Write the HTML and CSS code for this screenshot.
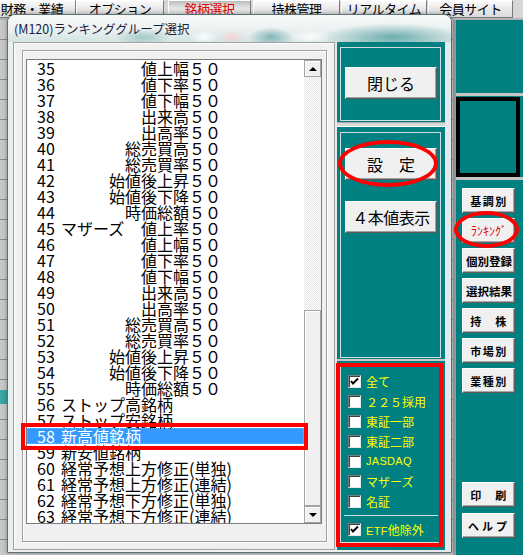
FILE: index.html
```html
<!DOCTYPE html>
<html lang="ja">
<head>
<meta charset="utf-8">
<title>M120</title>
<link rel="stylesheet" href="styles.css">
</head>
<body>
<div class="screen">
  <div class="tabs">
    <div class="tab t1">財務・業績</div>
    <div class="tab t2">オプション</div>
    <div class="tab t3 active">銘柄選択</div>
    <div class="tab t4">持株管理</div>
    <div class="tab t5">リアルタイム</div>
    <div class="tab t6">会員サイト</div>
  </div>
  <div class="main">
    <div class="bg-left"><div class="bg-teal"></div></div>
    <div class="side">
      <div class="side-top"></div>
      <div class="side-line"></div>
      <div class="side-box"></div>
      <div class="side-line"></div>
      <div class="side-btns">
        <div class="sbtn">基調別</div>
        <div class="sbtn red">ﾗﾝｷﾝｸﾞ</div>
        <div class="sbtn tight">個別登録</div>
        <div class="sbtn tight">選択結果</div>
        <div class="sbtn">持　株</div>
        <div class="sbtn">市場別</div>
        <div class="sbtn">業種別</div>
        <div class="sbtn print">印　刷</div>
        <div class="sbtn help">ヘルプ</div>
      </div>
    </div>
  </div>

  <div class="dialog">
    <div class="titlebar"><span class="title">(M120)ランキンググループ選択</span></div>
    <div class="client">
      <div class="lp">
        <div class="lp-inner">
          <div class="listbox">
            <div class="items">
              <div class="row"><span class="num">35</span><span class="nm">値上幅５０</span></div>
              <div class="row"><span class="num">36</span><span class="nm">値下率５０</span></div>
              <div class="row"><span class="num">37</span><span class="nm">値下幅５０</span></div>
              <div class="row"><span class="num">38</span><span class="nm">出来高５０</span></div>
              <div class="row"><span class="num">39</span><span class="nm">出高率５０</span></div>
              <div class="row"><span class="num">40</span><span class="nm">総売買高５０</span></div>
              <div class="row"><span class="num">41</span><span class="nm">総売買率５０</span></div>
              <div class="row"><span class="num">42</span><span class="nm">始値後上昇５０</span></div>
              <div class="row"><span class="num">43</span><span class="nm">始値後下降５０</span></div>
              <div class="row"><span class="num">44</span><span class="nm">時価総額５０</span></div>
              <div class="row"><span class="num">45</span><span class="nm split"><span>マザーズ</span><span>値上率５０</span></span></div>
              <div class="row"><span class="num">46</span><span class="nm">値上幅５０</span></div>
              <div class="row"><span class="num">47</span><span class="nm">値下率５０</span></div>
              <div class="row"><span class="num">48</span><span class="nm">値下幅５０</span></div>
              <div class="row"><span class="num">49</span><span class="nm">出来高５０</span></div>
              <div class="row"><span class="num">50</span><span class="nm">出高率５０</span></div>
              <div class="row"><span class="num">51</span><span class="nm">総売買高５０</span></div>
              <div class="row"><span class="num">52</span><span class="nm">総売買率５０</span></div>
              <div class="row"><span class="num">53</span><span class="nm">始値後上昇５０</span></div>
              <div class="row"><span class="num">54</span><span class="nm">始値後下降５０</span></div>
              <div class="row"><span class="num">55</span><span class="nm">時価総額５０</span></div>
              <div class="row"><span class="num">56</span><span class="nm l">ストップ高銘柄</span></div>
              <div class="row"><span class="num">57</span><span class="nm l">ストップ安銘柄</span></div>
              <div class="row sel"><span class="num">58</span><span class="nm l">新高値銘柄</span></div>
              <div class="row"><span class="num">59</span><span class="nm l">新安値銘柄</span></div>
              <div class="row"><span class="num">60</span><span class="nm l">経常予想上方修正(単独)</span></div>
              <div class="row"><span class="num">61</span><span class="nm l">経常予想上方修正(連結)</span></div>
              <div class="row"><span class="num">62</span><span class="nm l">経常予想下方修正(単独)</span></div>
              <div class="row"><span class="num">63</span><span class="nm l">経常予想下方修正(連結)</span></div>
            </div>
            <div class="vscroll">
              <div class="sb-btn up"><i></i></div>
              <div class="sb-track"></div>
              <div class="sb-thumb"></div>
              <div class="sb-btn down"><i></i></div>
            </div>
          </div>
        </div>
      </div>
      <div class="rcol">
        <div class="pnl p1">
          <div class="frame"><div class="btn b-close">閉じる</div></div>
        </div>
        <div class="pgap g1"></div>
        <div class="pnl p2">
          <div class="frame">
            <div class="btn b-set">設　定</div>
            <div class="btn b-four">４本値表示</div>
          </div>
        </div>
        <div class="pgap g2"></div>
        <div class="pnl p3">
          <div class="frame chkframe">
            <div class="chk"><span class="box"><svg width="11" height="11" viewBox="0 0 11 11"><polyline points="2,5 4,7.5 9,2.5" fill="none" stroke="#000" stroke-width="2"/></svg></span><span>全て</span></div>
            <div class="chk"><span class="box"></span><span>２２５採用</span></div>
            <div class="chk"><span class="box"></span><span>東証一部</span></div>
            <div class="chk"><span class="box"></span><span>東証二部</span></div>
            <div class="chk"><span class="box"></span><span class="lat">JASDAQ</span></div>
            <div class="chk"><span class="box"></span><span>マザーズ</span></div>
            <div class="chk"><span class="box"></span><span>名証</span></div>
            <div class="sep"></div>
            <div class="chk etf"><span class="box"><svg width="11" height="11" viewBox="0 0 11 11"><polyline points="2,5 4,7.5 9,2.5" fill="none" stroke="#000" stroke-width="2"/></svg></span><span><span class="lat">ETF</span>他除外</span></div>
          </div>
        </div>
      </div>
    </div>
  </div>

  <div class="mark rect-row"></div>
  <div class="mark rect-chk"></div>
  <div class="mark ell-set"></div>
  <div class="mark ell-rank"></div>
</div>
</body>
</html>
```

FILE: styles.css
```css
* { box-sizing: border-box; margin: 0; padding: 0; }
html, body { width: 523px; height: 555px; overflow: hidden; }
body { font-family: "Noto Sans CJK JP", "Noto Sans", sans-serif; background: #c8c8c8; }

.screen { position: relative; width: 523px; height: 555px; overflow: hidden; display: flex; flex-direction: column; background: #cfcfcf; }

/* ---------- main window tabs ---------- */
.tabs { display: flex; height: 20px; background: #d6d6d6; border-bottom: 2px solid #b4b4b4; }
.tab {
  height: 18px; display: flex; align-items: center; justify-content: center;
  font-size: 13px; letter-spacing: -0.5px; color: #000; line-height: 1;
  background: linear-gradient(#fbfbfb, #e9e9e9 45%, #dcdcdc);
  border: 1px solid; border-color: #ffffff #7a7a7a #7a7a7a #ffffff;
  padding-bottom: 1px;
}
.t1 { width: 88px; margin-left: -12px; }
.t2 { width: 88px; }
.t3 { width: 83px; margin-left: 4px; color: #e00000; background: linear-gradient(#bdbdbd, #e6e6e6 45%, #dedede); }
.t4 { width: 87px; margin-left: 2px; }
.t5 { width: 86px; margin-left: 1px; }
.t6 { width: 85px; margin-left: 1px; }

.main { flex: 1; display: flex; }
.bg-left {
  flex: 1; position: relative;
  background: repeating-linear-gradient(#c9c9c9 0 19px, #8a8a8a 19px 20px);
}
.bg-teal { width: 8px; height: 14px; margin-top: 370px; background: #3aa6a6; }

.side { width: 70px; border-left: 3px solid #9c9c9c; background: #008080; display: flex; flex-direction: column; }
.side-top { height: 73px; }
.side-line { height: 3px; background: #c6c6c6; }
.side-box { width: 64px; height: 80px; margin-top: 1px; border: 4px solid #000; background: #008080; }
.side-btns { padding: 8px 0 0 6px; display: flex; flex-direction: column; gap: 5px; }
.sbtn {
  width: 53px; height: 25px; display: flex; align-items: center; justify-content: center;
  background: #f0f0f0; border: 1px solid; border-color: #ffffff #5e5e5e #5e5e5e #ffffff;
  box-shadow: inset -1px -1px 0 #a8a8a8;
  font-size: 11px; font-weight: bold; letter-spacing: 1.5px; color: #000; padding-left: 1px;
}
.sbtn.tight { letter-spacing: 0; font-size: 11.5px; }
.sbtn.red { color: #e00000; font-weight: normal; letter-spacing: 0; font-size: 12px; }
.sbtn.print { margin-top: 84px; }
.sbtn.help { margin-top: 1px; letter-spacing: 3px; }

/* ---------- dialog window ---------- */
.dialog {
  position: absolute; left: 7px; top: 14px; width: 445px; height: 539px;
  border: 1px solid #5b6f76; border-radius: 8px 8px 0 0;
  background: linear-gradient(90deg, #e9eef0, #f2f5f6 50%, #e3eaec);
  padding: 0 5px 2px 5px;
  display: flex; flex-direction: column;
  box-shadow: 0 0 5px rgba(0,0,0,.35);
}
.titlebar {
  height: 27px; margin: 0 -5px; padding: 0 0 1px 6px;
  display: flex; align-items: center;
  border-radius: 7px 7px 0 0;
  background:
    radial-gradient(28px 9px at 135px 22px, rgba(40,130,130,.30), transparent),
    radial-gradient(14px 7px at 196px 22px, rgba(255,255,255,.95), transparent),
    radial-gradient(14px 7px at 224px 22px, rgba(255,205,205,.7), transparent),
    radial-gradient(22px 10px at 263px 22px, rgba(20,120,120,.45), transparent),
    radial-gradient(22px 8px at 302px 22px, rgba(255,255,255,.9), transparent),
    radial-gradient(70px 14px at 385px 22px, rgba(20,125,125,.55), transparent),
    linear-gradient(#f7f9f9, #eef3f3 45%, #d4e3e3);
}
.title { font-size: 12.5px; color: #1c1c3c; letter-spacing: 0; white-space: nowrap; }

.client { height: 508px; display: flex; background: #e8e8e8; }

/* left list panel */
.lp {
  width: 322px; height: 508px; padding: 7px 7px 7px 8px;
  border: 1px solid #a0a0a0; box-shadow: inset 1px 1px 0 #ffffff;
  background: #f0f0f0;
}
.lp-inner {
  height: 100%; padding: 8px 4px 17px 3px;
  border: 1px solid #a0a0a0; box-shadow: inset 1px 1px 0 #ffffff, 1px 1px 0 #ffffff;
}
.listbox { width: 296px; height: 465px; border: 1px solid #7c7c7c; display: flex; background: #fff; }
.items { width: 277px; height: 463px; overflow: hidden; font-size: 16px; line-height: 16px; color: #000; }
.row { height: 16px; display: flex; padding-left: 10px; white-space: nowrap; }
.num { width: 24px; flex: none; }
.nm { width: 160px; text-align: right; flex: none; }
.nm.l { width: auto; text-align: left; }
.nm.split { display: flex; justify-content: space-between; }
.row.sel { background: #3399ff; color: #fff; outline: 1px dotted #ff9a3c; outline-offset: -1px; }

.vscroll { width: 17px; display: flex; flex-direction: column; }
.sb-btn {
  height: 17px; flex: none; background: #f0f0f0;
  border: 1px solid #a3a3a3; box-shadow: inset 1px 1px 0 #fff;
  display: flex; align-items: center; justify-content: center;
}
.sb-btn i { display: block; width: 0; height: 0; border-left: 4px solid transparent; border-right: 4px solid transparent; }
.up i { border-bottom: 4px solid #000; }
.down i { border-top: 4px solid #000; }
.sb-track { height: 233px; flex: none; background: repeating-conic-gradient(#e4e4e4 0 25%, #ffffff 0 50%) 0 0 / 2px 2px; }
.sb-thumb { flex: 1; background: #f0f0f0; border: 1px solid #a3a3a3; box-shadow: inset 1px 1px 0 #fff; }

/* right button column */
.rcol { width: 108px; margin-left: 2px; display: flex; flex-direction: column; }
.pnl { background: #008080; padding: 5px 4px 1px 3px; }
.p1 { height: 80px; }
.p2 { height: 232px; }
.p3 { height: 189px; padding: 3px 4px 7px 3px; }
.pgap { background: #d8d8d8; border-top: 1px solid #a8a8a8; border-bottom: 1px solid #ffffff; }
.g1 { height: 5px; }
.g2 { height: 2px; border: 0; background: #c8c8c8; }
.frame { height: 100%; border: 1px solid #d3dcdc; }
.btn {
  width: 92px; height: 32px; margin-left: 4px;
  display: flex; align-items: center; justify-content: center;
  background: #f0f0f0; border: 1px solid; border-color: #ffffff #5a5a5a #5a5a5a #ffffff;
  box-shadow: inset -1px -1px 0 #a0a0a0;
  font-size: 16px; color: #000; white-space: nowrap;
}
.b-close { margin-top: 19px; }
.b-set { margin-top: 15px; }
.b-four { margin-top: 21px; letter-spacing: -0.5px; }

.chkframe { padding: 6px 0 3px 7px; display: flex; flex-direction: column; }
.chk { height: 20px; flex: none; display: flex; align-items: center; gap: 5px; color: #ffff00; font-size: 12px; white-space: nowrap; }
.box {
  width: 13px; height: 13px; flex: none; background: #fff;
  border: 1px solid; border-color: #7c7c7c #e6e6e6 #e6e6e6 #7c7c7c;
  box-shadow: inset 1px 1px 0 #404040;
  display: flex; align-items: center; justify-content: center;
}
.box svg { display: block; }
.lat { font-family: "Liberation Sans", sans-serif; font-size: 11px; letter-spacing: 0.3px; }
.sep { width: 94px; height: 1px; margin: 4px 0 0 -4px; background: #cfe4e4; flex: none; }
.chk.etf { margin-top: 3px; }

/* ---------- red annotations ---------- */
.mark { position: absolute; border: 4px solid #ff0000; pointer-events: none; }
.rect-row { left: 21px; top: 423px; width: 287px; height: 27px; }
.rect-chk { left: 336px; top: 363px; width: 107px; height: 184px; }
.ell-set { left: 338px; top: 140px; width: 100px; height: 47px; border-radius: 50%; }
.ell-rank { left: 454px; top: 211px; width: 65px; height: 37px; border-radius: 50%; }
```
